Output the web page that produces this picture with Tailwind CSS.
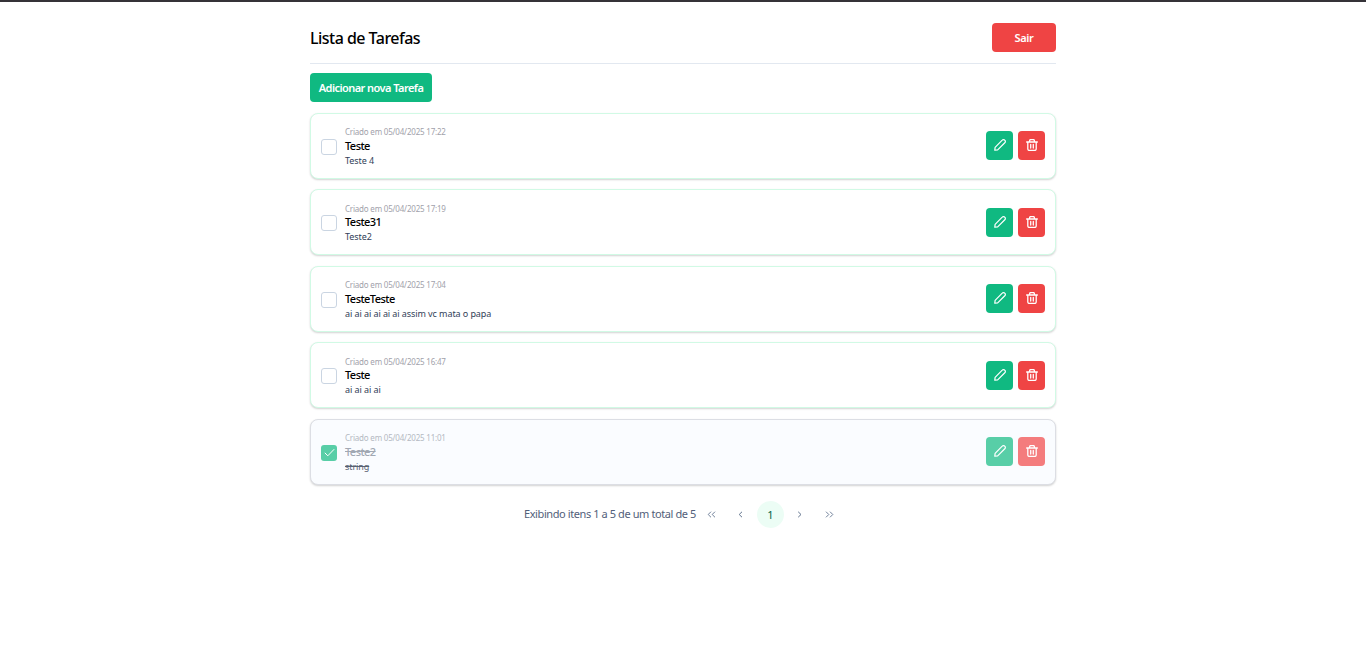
<!DOCTYPE html>
<html lang="pt-BR">
<head>
<meta charset="utf-8">
<title>Lista de Tarefas</title>
<script src="https://cdn.jsdelivr.net/npm/@tailwindcss/browser@4"></script>
</head>
<body class="h-[647px] overflow-hidden border-t-2 border-[#353338] bg-white font-['Segoe_UI','Noto_Sans',sans-serif] text-black">
<svg class="hidden">
  <symbol id="pencil" viewBox="0 0 14 14" fill="none" stroke="currentColor" stroke-width="1.4" stroke-linejoin="round" stroke-linecap="round">
    <path d="M.9 13.1 1.3 9.7 9.6 1.4a2 2 0 0 1 3 0 2 2 0 0 1 0 3L4.3 12.7Z"/>
  </symbol>
  <symbol id="trash" viewBox="0 0 14 14" fill="none" stroke="currentColor" stroke-width="1.5" stroke-linejoin="round" stroke-linecap="round">
    <path d="M.7 3.5h12.6M2.1 3.7v8.1q0 1.5 1.5 1.5h6.8q1.5 0 1.5-1.5V3.7M4.2 3.3V2q0-1.3 1.3-1.3h3q1.3 0 1.3 1.3v1.3M5.5 6.4v4.1M8.5 6.4v4.1"/>
  </symbol>
</svg>
<main class="mx-auto w-[746px]">
  <header class="flex h-[62px] items-start justify-between border-b border-slate-200 pt-[21px]">
    <h1 class="text-[16px] leading-[31px] font-medium whitespace-nowrap tracking-[-0.53px]">Lista de Tarefas</h1>
    <button class="h-[29px] w-16 rounded-[4px] bg-[#ef4444] text-[11px] leading-[29px] font-semibold text-white tracking-[-0.4px]">Sair</button>
  </header>
  <button class="mt-[9px] block h-[29px] w-[122px] rounded-[4px] bg-[#10b981] text-[11px] leading-[29px] font-semibold whitespace-nowrap text-white tracking-[-0.55px]">Adicionar nova Tarefa</button>
  <section id="tasks" class="mt-[10.9px] flex flex-col gap-[10.5px]"></section>
  <nav class="mt-[16px] flex h-[27px] items-center pl-[214px] text-[11px] text-slate-500">
    <span class="w-[173px] shrink-0 whitespace-nowrap tracking-[-0.41px] text-[#52607a]">Exibindo itens 1 a 5 de um total de 5</span>
    <span class="ml-1 flex w-[21px] justify-center"><svg class="h-[7px] w-[9px]" viewBox="0 0 9 7" fill="none" stroke="currentColor" stroke-width=".9"><path d="M4 .7 1.2 3.5 4 6.3M8 .7 5.2 3.5 8 6.3"/></svg></span>
    <span class="ml-[8px] flex w-[21px] justify-center"><svg class="h-[7px] w-[5px]" viewBox="0 0 5 7" fill="none" stroke="currentColor" stroke-width="1"><path d="M4 .8 1.2 3.5 4 6.2"/></svg></span>
    <span class="ml-[6px] h-[27px] w-[27px] rounded-full bg-emerald-50 text-center leading-[27px] text-emerald-800">1</span>
    <span class="ml-[5px] flex w-[21px] justify-center"><svg class="h-[7px] w-[5px]" viewBox="0 0 5 7" fill="none" stroke="currentColor" stroke-width="1"><path d="M1.2 .8 4 3.5 1.2 6.2"/></svg></span>
    <span class="ml-[9px] flex w-[21px] justify-center"><svg class="h-[7px] w-[9px]" viewBox="0 0 9 7" fill="none" stroke="currentColor" stroke-width=".9"><path d="M1 .7 3.8 3.5 1 6.3M5 .7 7.8 3.5 5 6.3"/></svg></span>
  </nav>
</main>
<script>
const tasks = [
  ["05/04/2025 17:22", "Teste", "Teste 4"],
  ["05/04/2025 17:19", "Teste31", "Teste2"],
  ["05/04/2025 17:04", "TesteTeste", "ai ai ai ai ai ai assim vc mata o papa"],
  ["05/04/2025 16:47", "Teste", "ai ai ai ai"],
  ["05/04/2025 11:01", "Teste2", "string", true]
];
document.getElementById("tasks").innerHTML = tasks.map(([date, title, text, done]) => `
  <article class="flex h-[66px] items-center rounded-[8px] border px-[10px] shadow-[0_1px_2px_rgba(0,0,0,0.18)] ${done ? "border-[#dcdee4] bg-[#fafcff]" : "border-[#d1fae5] bg-white"}">
    ${done
      ? `<span class="mt-[2px] flex size-4 items-center justify-center rounded-[3px] bg-[#58cea7] text-white"><svg class="size-[11px]" viewBox="0 0 11 11" fill="none" stroke="currentColor"><path d="M.8 5.8 3.8 8.8 10.2 2.2"/></svg></span>`
      : `<span class="mt-[1.5px] size-4 rounded-[3px] border border-slate-300 bg-white"></span>`}
    <div class="ml-2 flex-1 pt-[0.6px] whitespace-nowrap">
      <p class="pt-[0.7px] text-[8px] leading-[11px] tracking-[-0.2px] ${done ? "text-[#b4b9c2]" : "text-[#a1a1aa]"}">Criado em ${date}</p>
      <h2 class="mt-[0.3px] text-[11px] leading-[16px] font-medium tracking-[-0.55px] ${done ? "text-[#a1a8b3] line-through" : "text-black"}">${title}</h2>
      <p class="text-[9px] leading-[13px] tracking-[-0.08px] ${done ? "text-[#586273] line-through" : "text-slate-700"}">${text}</p>
    </div>
    <div class="mb-[0.6px] flex gap-[5px] text-white">
      <button class="flex h-[29px] w-[27px] items-center justify-center rounded-[4px] pb-px ${done ? "bg-[#58cea7]" : "bg-[#10b981]"}"><svg class="size-3"><use href="#pencil"/></svg></button>
      <button class="flex h-[29px] w-[27px] items-center justify-center rounded-[4px] pb-px ${done ? "bg-[#f47c7d]" : "bg-[#ef4444]"}"><svg class="size-3"><use href="#trash"/></svg></button>
    </div>
  </article>`).join("");
</script>
</body>
</html>
